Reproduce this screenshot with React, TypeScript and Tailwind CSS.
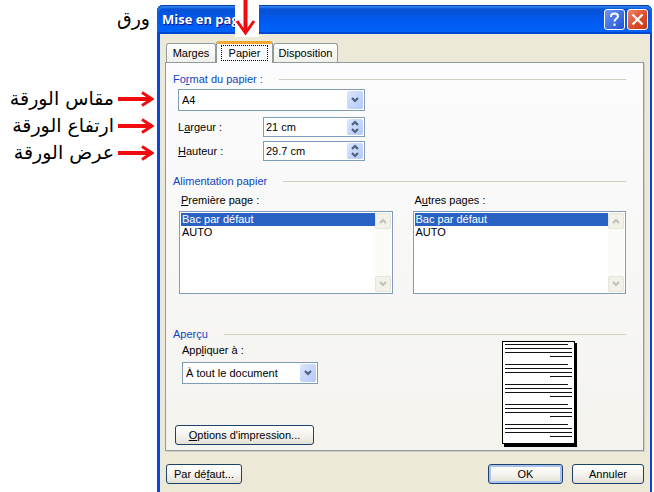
import React, { useState } from "react";
import clsx from "clsx";

const TABS = [
  { name: "Marges", width: "w-[50px]" },
  { name: "Papier", width: "w-[57px]" },
  { name: "Disposition", width: "w-[65px]" },
];
const TRAYS = ["Bac par défaut", "AUTO"];
const NOTES = ["مقاس الورقة", "ارتفاع الورقة", "عرض الورقة"];

const Chevron = ({ up = false, className = "" }: { up?: boolean; className?: string }) => (
  <svg viewBox="0 0 8 6" className={clsx("h-[6px] w-2 fill-none stroke-[2.2]", className)} aria-hidden="true">
    <path d={up ? "M1 5 4 2l3 3" : "M1 1l3 3 3-3"} />
  </svg>
);

const Arrow = () => (
  <svg viewBox="0 0 37 20" className="h-5 w-[37px] fill-none stroke-[#f00b0e]" aria-hidden="true">
    <path d="M1 10h32" strokeWidth="4" />
    <path d="M25 3.500l10 6.500-10 6.500" strokeWidth="3" />
  </svg>
);

// Arabic captions pointing at the paper fields
const Notes = () => (
  <aside
    dir="rtl"
    className="flex w-[157px] shrink-0 flex-col pt-[5px] pr-[3px] font-['DejaVu_Sans','Noto_Sans',sans-serif] text-[19px] leading-[27px]"
  >
    <p className="pr-1">ورق</p>
    <ul className="mt-[53px]">
      {NOTES.map((note) => (
        <li key={note} className="flex items-center gap-[3px] whitespace-nowrap">
          <Arrow />
          {note}
        </li>
      ))}
    </ul>
  </aside>
);

const SectionTitle = ({ children }: { children: React.ReactNode }) => (
  <h2 className="flex items-center gap-4 leading-[14px] text-[#0f46bd]">
    <span>{children}</span>
    <span className="h-px flex-1 bg-[#d0d0bf]" />
  </h2>
);

type DropDownProps = { id: string; options: string[]; className: string; label?: string };

const DropDown = ({ id, options, className, label }: DropDownProps) => (
  <div className={clsx("grid h-[22px] border border-[#7f9db9] bg-white", className)}>
    <select id={id} aria-label={label} className="col-start-1 row-start-1 appearance-none bg-transparent pl-[3px] outline-none">
      {options.map((o) => (
        <option key={o}>{o}</option>
      ))}
    </select>
    <span className="pointer-events-none col-start-1 row-start-1 m-px flex w-4 items-center justify-center justify-self-end rounded-[2px] bg-linear-to-br from-[#dbe6fd] to-[#b4c8f6]">
      <Chevron className="stroke-[#4d6185]" />
    </span>
  </div>
);

type SpinnerProps = { id: string; initial: number; name: string; children: React.ReactNode };

const Spinner = ({ id, initial, name, children }: SpinnerProps) => {
  const [value, setValue] = useState(`${initial} cm`);
  const step = (delta: number) => setValue(`${Math.round((parseFloat(value) + delta) * 10) / 10} cm`);

  return (
    <div className="flex items-center">
      <label htmlFor={id} className="w-[85px]">
        {children}
      </label>
      <div className="flex h-5 w-[102px] border border-[#7f9db9] bg-white">
        <input id={id} value={value} onChange={(e) => setValue(e.target.value)} className="w-0 flex-1 pl-[2px] outline-none" />
        <div className="m-px flex w-4 flex-col rounded-[2px] bg-linear-to-br from-[#dbe6fd] to-[#b4c8f6]">
          <button aria-label={`Augmenter ${name}`} onClick={() => step(0.1)} className="flex flex-1 items-center justify-center">
            <Chevron up className="stroke-[#4d6185]" />
          </button>
          <button aria-label={`Diminuer ${name}`} onClick={() => step(-0.1)} className="flex flex-1 items-center justify-center">
            <Chevron className="stroke-[#4d6185]" />
          </button>
        </div>
      </div>
    </div>
  );
};

const TrayList = ({ id, children }: { id: string; children: React.ReactNode }) => {
  const [selected, setSelected] = useState(TRAYS[0]);
  const scrollButton = "flex h-4 w-full items-center justify-center rounded-[2px] border border-[#e6e5da] bg-[#f2f1ea]";

  return (
    <div>
      <div id={id} className="pl-[2px] leading-[14px]">
        {children}
      </div>
      <div className="mt-1 flex h-[83px] border border-[#7f9db9] bg-white p-px">
        <ul role="listbox" aria-labelledby={id} tabIndex={0} className="flex-1 leading-[13px] outline-none">
          {TRAYS.map((tray) => (
            <li
              key={tray}
              role="option"
              aria-selected={tray === selected}
              onClick={() => setSelected(tray)}
              className={clsx("px-px", tray === selected && "bg-[#2a62c4] text-white")}
            >
              {tray}
            </li>
          ))}
        </ul>
        <div className="flex w-4 flex-col justify-between bg-[#fbfbf8]">
          <button aria-label="Défiler vers le haut" className={scrollButton}>
            <Chevron up className="stroke-[#c3c2b6]" />
          </button>
          <button aria-label="Défiler vers le bas" className={scrollButton}>
            <Chevron className="stroke-[#c3c2b6]" />
          </button>
        </div>
      </div>
    </div>
  );
};

const PushButton = ({ children, className }: { children: React.ReactNode; className: string }) => (
  <button
    className={clsx(
      "h-5 rounded-[3px] border border-[#1d4168] bg-linear-to-b from-white via-[#f5f4ef] to-[#e3e0d5] whitespace-nowrap",
      className
    )}
  >
    {children}
  </button>
);

const PagePreview = () => (
  <svg viewBox="0 0 75 106" className="h-[106px] w-[75px]" role="img" aria-label="Aperçu de la page" shapeRendering="crispEdges">
    <path d="M2 2h73v104H2z" />
    <path d="M.5.5h72v102H.5z" fill="#fff" stroke="#000" />
    {[0, 1, 2, 3, 4].map((i) => (
      <path key={i} d="M3 3.5h63M3 7.5h67M3 11.5h67M48 15.5h22" transform={`translate(0 ${i * 20})`} stroke="#111" />
    ))}
  </svg>
);

const PaperPanel = () => (
  <div className="border border-[#919b9c] bg-linear-to-b from-[#fcfcfe] to-[#f4f3ee] pt-[9px] pr-[17px] pb-[3px] pl-[7px] shadow-[1px_1px_0_#d0cebf]">
    <SectionTitle>
      Fo<u>r</u>mat du papier :
    </SectionTitle>
    <div className="mt-[3px] flex flex-col pl-[5px]">
      <DropDown id="format" label="Format du papier" options={["A4", "A3", "A5", "Letter"]} className="w-[187px]" />
      <div className="mt-[6px] flex flex-col gap-1">
        <Spinner id="largeur" initial={21} name="la largeur">
          L<u>a</u>rgeur :
        </Spinner>
        <Spinner id="hauteur" initial={29.7} name="la hauteur">
          <u>H</u>auteur :
        </Spinner>
      </div>
    </div>

    <div className="mt-[13px]">
      <SectionTitle>Alimentation papier</SectionTitle>
      <div className="mt-[5px] grid grid-cols-2 gap-5 pl-[6px]">
        <TrayList id="premiere">
          <u>P</u>remière page :
        </TrayList>
        <TrayList id="autres">
          A<u>u</u>tres pages :
        </TrayList>
      </div>
    </div>

    <div className="mt-[33px]">
      <SectionTitle>Aperçu</SectionTitle>
      <div className="flex justify-between pr-[49px]">
        <div className="flex flex-col items-start pt-[2px]">
          <label htmlFor="appliquer" className="pl-[9px] leading-[14px]">
            App<u>l</u>iquer à :
          </label>
          <DropDown id="appliquer" options={["À tout le document", "À partir de ce point"]} className="mt-[5px] ml-[9px] w-[136px]" />
          <PushButton className="mt-[41px] ml-[2px] w-[139px]">
            <u>O</u>ptions d'impression...
          </PushButton>
        </div>
        <PagePreview />
      </div>
    </div>
  </div>
);

const TitleBar = () => (
  <header className="flex h-[29px] items-center gap-[2px] rounded-t-[6px] bg-linear-to-b from-[#0a4fc8] via-[#0058ee] to-[#0064fb] pr-1 pl-[5px] shadow-[inset_0_1px_0_#0b3fa6,inset_0_3px_2px_#2f83f5,inset_0_-2px_1px_#0046cf]">
    <h1 className="flex-1 font-['Open_Sans','Noto_Sans',sans-serif] text-[13px] font-bold text-white [text-shadow:1px_1px_#0f1089]">
      Mise en page
    </h1>
    <button aria-label="Aide" className="flex size-[21px] items-center justify-center rounded-[3px] border border-white bg-linear-to-br from-[#6d95f3] to-[#1d4fd6]">
      <svg viewBox="0 0 13 15" className="h-[15px] w-[13px] fill-none stroke-white" strokeWidth="2" aria-hidden="true">
        <path d="M3 5V4c0-1.500 1.500-2.500 3.500-2.500S10 2.500 10 4.200C10 6.500 6.500 6.500 6.500 9.500M6.500 11.500v2.500" />
      </svg>
    </button>
    <button aria-label="Fermer" className="flex size-[21px] items-center justify-center rounded-[3px] border border-white bg-linear-to-br from-[#f0866a] via-[#e0502c] to-[#c23a14]">
      <svg viewBox="0 0 13 13" className="size-[13px] stroke-white" strokeWidth="2.200" aria-hidden="true">
        <path d="M1.500 1.500l10 10M11.500 1.500l-10 10" />
      </svg>
    </button>
  </header>
);

const Dialog = () => {
  const [tab, setTab] = useState("Papier");

  return (
    <main className="relative mt-[5px] mr-[2px] flex flex-1 flex-col rounded-t-[6px] bg-[#0a46d8] text-[11px]">
      <TitleBar />
      <div className="mr-[2px] ml-[3px] flex-1 bg-[#ece9d8] pt-[7px] pr-[6px] pb-[9px] pl-[5px]">
        <div role="tablist" className="flex h-[21px] items-end pl-px">
          {TABS.map(({ name, width }) => (
            <button
              key={name}
              role="tab"
              aria-selected={tab === name}
              onClick={() => setTab(name)}
              className={clsx(
                "rounded-t-[3px] border border-b-0 border-[#919b9c]",
                width,
                tab === name
                  ? "relative -mb-px h-[22px] border-t-3 border-t-[#f5a733] bg-[#fcfcfe] px-1 pb-[2px]"
                  : "h-[19px] bg-linear-to-b from-white to-[#f0f0ea]"
              )}
            >
              <span className={clsx("block", tab === name && "border border-dotted border-black leading-[14px]")}>{name}</span>
            </button>
          ))}
        </div>
        <PaperPanel />
        <footer className="mt-[13px] flex gap-[9px] pl-px">
          <PushButton className="w-[76px]">
            Par dé<u>f</u>aut...
          </PushButton>
          <PushButton className="ml-auto w-[75px] shadow-[inset_0_0_0_2px_#a9c1f0]">OK</PushButton>
          <PushButton className="w-[72px]">Annuler</PushButton>
        </footer>
      </div>

      {/* Marker laid over the title, aimed at the active tab */}
      <svg viewBox="0 0 24 37" className="absolute -top-[5px] left-[78px] h-[37px] w-6 fill-none stroke-[#f00b0e]" aria-hidden="true">
        <path d="M0 0h24v37H0z" fill="#fff" stroke="none" />
        <path d="M10.500 0v32" strokeWidth="4" />
        <path d="M2 21l8.500 12L19 21" strokeWidth="3" />
      </svg>
    </main>
  );
};

export default function App() {
  return (
    <div className="flex min-h-screen bg-white font-['Liberation_Sans','DejaVu_Sans_Condensed',sans-serif] text-black">
      <Notes />
      <Dialog />
    </div>
  );
}
